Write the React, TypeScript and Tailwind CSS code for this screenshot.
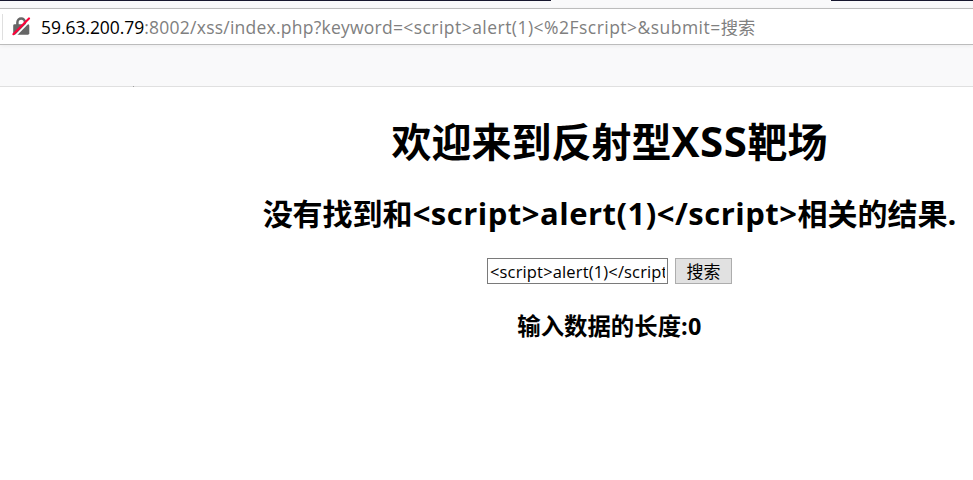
const latin = "font-['Open_Sans','Noto_Sans_CJK_SC',sans-serif]";
const cjk = "font-['Noto_Sans_CJK_SC',sans-serif]";

function InsecureLock() {
  return (
    <svg className="ml-[9px] h-5 w-5 shrink-0" viewBox="0 0 20 20" fill="none">
      <path d="M5.4 8.5V5.2a3.8 3.8 0 0 1 7.6 0V8.5" stroke="#666666" strokeWidth="2.5" />
      <rect x="1.2" y="7.3" width="16.1" height="10.4" rx="1.4" fill="#666666" />
      <path d="M2.8 19.4 19 2.9" stroke="#ffffff" strokeWidth="1.7" />
      <path d="M1.4 17.2 17 1.4" stroke="#ff0039" strokeWidth="2.1" strokeLinecap="round" />
    </svg>
  );
}

export default function App() {
  return (
    <div className={`h-[480px] w-full overflow-hidden bg-white text-black ${latin}`}>
      <header className="flex h-[87px] flex-col bg-[#f9f9fa]">
        <div className="flex h-px justify-between">
          <div className="w-[551px] bg-[#17172e]" />
          <div className="w-[142px] bg-[#17172e]" />
        </div>
        <div className="mt-[7px] flex h-[37px] items-center border-y border-[#bcbcbc] bg-white shadow-[0_1px_4px_rgba(0,0,0,0.06)]">
          <div className="ml-[2px] h-[26px] w-px bg-[#dfdfdf]" />
          <InsecureLock />
          <div className="ml-[9px] whitespace-pre text-[17.5px] leading-[24px] text-[#808080]">
            <span className="tracking-[-0.05px] text-black">59.63.200.79</span>
            <span className="tracking-[0.24px]">:8002/xss/index.php?keyword=</span>
            <span className="tracking-[0.47px]">&lt;script&gt;alert(1)&lt;%2Fscript&gt;&amp;submit=</span>
            <span className={`text-[17.3px] ${cjk}`}>搜索</span>
          </div>
        </div>
        <div className="mt-auto flex h-px bg-[#e0e0e0]">
          <div className="ml-[133px] w-px bg-[#a0a0a0]" />
        </div>
      </header>
      <main className="ml-[246px] flex w-[727px] flex-col items-center whitespace-nowrap">
        <h1 className="mt-[23px] flex h-[60px] items-baseline text-[40px] leading-[60px] font-bold">
          <span className={cjk}>欢迎来到反射型</span>
          <span className="text-[42px] tracking-[0.5px]">XSS</span>
          <span className={cjk}>靶场</span>
        </h1>
        <h2 className="mt-[20px] flex h-[44px] items-baseline text-[30px] leading-[44px] font-bold">
          <span className={cjk}>没有找到和</span>
          <span className="text-[31px] tracking-[0.5px]">&lt;script&gt;alert(1)&lt;/script&gt;</span>
          <span className={cjk}>相关的结果</span>
          <span className="text-[31px]">.</span>
        </h2>
        <form className="mt-[24px] flex h-[26px] gap-[7px]" onSubmit={(e) => e.preventDefault()}>
          <input
            className="h-[26px] w-[181px] border border-[#7a7a7a] bg-white px-[2px] text-[16.5px] tracking-[0.15px] outline-none"
            defaultValue="<script>alert(1)</script>"
          />
          <button className={`h-[26px] w-[57px] border border-[#adadad] bg-[#e1e1e1] text-[17px] leading-[24px] ${cjk}`}>搜索</button>
        </form>
        <h3 className="mt-[23px] flex h-[36px] items-baseline text-[23.4px] leading-[36px] font-bold">
          <span className={cjk}>输入数据的长度</span>
          <span className="tracking-[0.3px]">:0</span>
        </h3>
      </main>
    </div>
  );
}
